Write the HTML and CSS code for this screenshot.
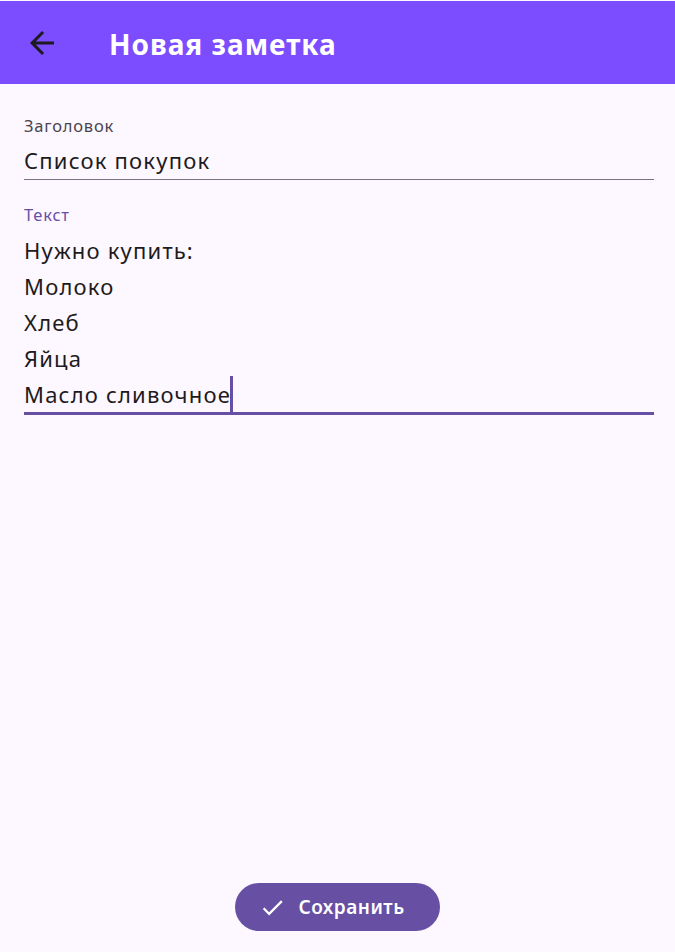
FILE: index.html
```html
<!DOCTYPE html>
<html lang="ru">
<head>
<meta charset="utf-8">
<link rel="stylesheet" href="styles.css">
</head>
<body>
<div class="screen">
  <header class="appbar">
    <button class="back" aria-label="Назад">
      <svg viewBox="0 0 24 24" width="36" height="36"><path d="M20 11H7.83l5.59-5.59L12 4l-8 8 8 8 1.41-1.41L7.83 13H20v-2z" fill="#1d1b20"/></svg>
    </button>
    <h1 class="title">Новая заметка</h1>
  </header>
  <main class="content">
    <div class="field">
      <div class="label">Заголовок</div>
      <div class="value">Список покупок</div>
    </div>
    <div class="field focused">
      <div class="label">Текст</div>
      <div class="value multi">
        <div>Нужно купить:</div>
        <div>Молоко</div>
        <div>Хлеб</div>
        <div>Яйца</div>
        <div>Масло сливочное<span class="caret"></span></div>
      </div>
    </div>
  </main>
  <footer class="actions">
    <button class="save">
      <svg viewBox="0 0 24 24" width="27" height="27"><path d="M9 16.17L4.83 12l-1.42 1.41L9 19 21 7l-1.41-1.41z" fill="#ffffff"/></svg>
      <span>Сохранить</span>
    </button>
  </footer>
</div>
</body>
</html>
```
FILE: styles.css
```css
* { box-sizing: border-box; }
html, body { margin: 0; padding: 0; }
body {
  background: #fdf7ff;
  font-family: "Noto Sans", "Open Sans", sans-serif;
  color: #1d1b20;
}
.screen {
  width: 675px;
  height: 952px;
  display: flex;
  flex-direction: column;
}
.appbar {
  margin-top: 1px;
  height: 83px;
  background: #7c4dff;
  display: flex;
  align-items: center;
  padding-left: 24px;
}
.back {
  width: 36px;
  height: 36px;
  padding: 0;
  border: 0;
  background: transparent;
  display: flex;
}
.title {
  margin: 2px 0 0 49px;
  font-size: 28px;
  font-weight: 700;
  letter-spacing: 1px;
  color: #ffffff;
  line-height: 40px;
}
.content {
  flex: 1;
  padding: 0 21px 0 24px;
}
.field {
  border-bottom: 1.5px solid #79747e;
  margin-top: 30px;
}
.field + .field { margin-top: 23px; }
.label {
  font-size: 16.5px;
  line-height: 24px;
  letter-spacing: 0.8px;
  color: #49454f;
}
.value {
  font-size: 22px;
  line-height: 36px;
  letter-spacing: 1.2px;
  margin-top: 4px;
  padding-bottom: 1px;
}
.focused { border-bottom: 3px solid #6750a4; }
.focused .label { color: #6750a4; }
.multi { margin-top: 5px; padding-bottom: 0; }
.caret {
  display: inline-block;
  width: 3px;
  height: 36px;
  margin-left: -1px;
  background: #6750a4;
  vertical-align: top;
}
.actions {
  display: flex;
  justify-content: center;
  padding-bottom: 21px;
}
.save {
  height: 48px;
  border: 0;
  border-radius: 24px;
  background: #6750a4;
  color: #ffffff;
  display: flex;
  align-items: center;
  gap: 12px;
  padding: 0 35px 0 24px;
  font-family: "Noto Sans", "Open Sans", sans-serif;
  font-size: 19px;
  font-weight: 600;
  letter-spacing: 0.5px;
}
```
